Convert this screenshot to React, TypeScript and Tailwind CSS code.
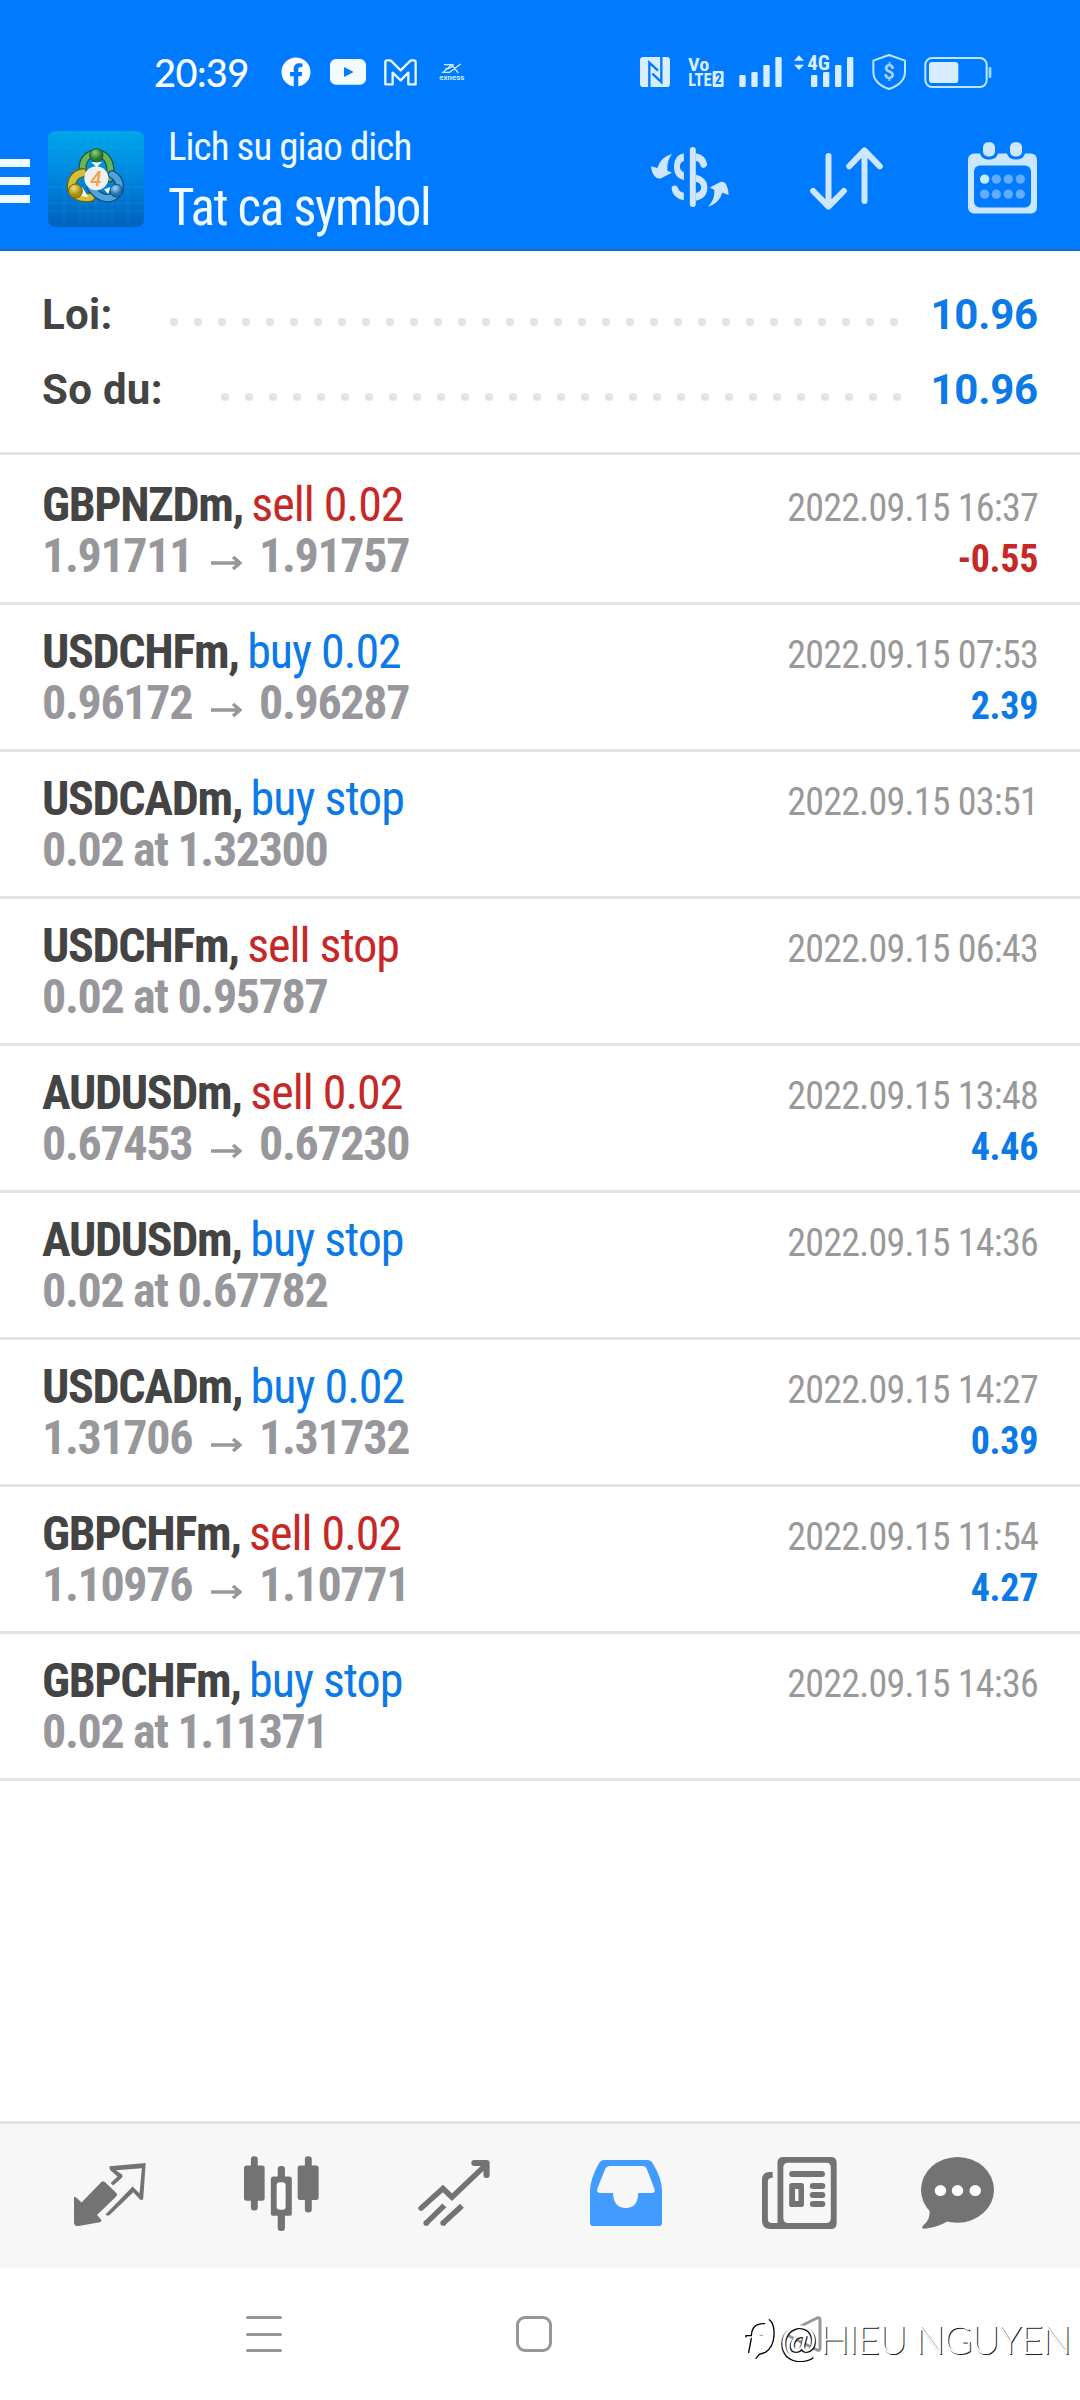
import { ReactNode } from "react";
import { FaFacebook } from "react-icons/fa";

//TYPES
type Side = "buy" | "sell";

interface Order {
  symbol: string;
  side: Side;
  action: string;
  price: string;
  closePrice?: string;
  date: string;
  profit?: string;
}

//DATA
const orders: Order[] = [
  { symbol: "GBPNZDm", side: "sell", action: "sell 0.02", price: "1.91711", closePrice: "1.91757", date: "2022.09.15 16:37", profit: "-0.55" },
  { symbol: "USDCHFm", side: "buy", action: "buy 0.02", price: "0.96172", closePrice: "0.96287", date: "2022.09.15 07:53", profit: "2.39" },
  { symbol: "USDCADm", side: "buy", action: "buy stop", price: "0.02 at 1.32300", date: "2022.09.15 03:51" },
  { symbol: "USDCHFm", side: "sell", action: "sell stop", price: "0.02 at 0.95787", date: "2022.09.15 06:43" },
  { symbol: "AUDUSDm", side: "sell", action: "sell 0.02", price: "0.67453", closePrice: "0.67230", date: "2022.09.15 13:48", profit: "4.46" },
  { symbol: "AUDUSDm", side: "buy", action: "buy stop", price: "0.02 at 0.67782", date: "2022.09.15 14:36" },
  { symbol: "USDCADm", side: "buy", action: "buy 0.02", price: "1.31706", closePrice: "1.31732", date: "2022.09.15 14:27", profit: "0.39" },
  { symbol: "GBPCHFm", side: "sell", action: "sell 0.02", price: "1.10976", closePrice: "1.10771", date: "2022.09.15 11:54", profit: "4.27" },
  { symbol: "GBPCHFm", side: "buy", action: "buy stop", price: "0.02 at 1.11371", date: "2022.09.15 14:36" },
];

//STATUS BAR
const SignalBars = ({ x }: { x: number }) => (
  <g fill="#d8edff">
    <rect x={x} y="105" width="19" height="36" rx="4" />
    <rect x={x + 36} y="96" width="19" height="45" rx="4" />
    <rect x={x + 72} y="75" width="19" height="66" rx="4" />
    <rect x={x + 108} y="51" width="19" height="90" rx="4" />
  </g>
);

const StatusBar = () => (
  <div className="flex h-9 items-center">
    <span className="ml-[154px] w-[127px] font-['Lato'] text-[38px] leading-9 font-medium tracking-[-0.6px] text-white">
      20:39
    </span>
    <FaFacebook className="size-[30px] text-white" />
    <svg className="ml-[19px] h-[26px] w-9" viewBox="180 44 108 78">
      <rect x="180" y="44" width="108" height="77" rx="18" fill="#f4fbff" />
      <path d="M222 68L251 83L222 98z" fill="#007aff" />
    </svg>
    <svg className="ml-[18px] h-[27px] w-[33px]" viewBox="341 41 99 81">
      <path
        d="M350 45H358Q361 45 364 48L391 75L418 48Q421 45 424 45H430Q436 45 436 51V117H414V82L391 105L367 82V117H345V51Q345 45 350 45z"
        fill="none"
        stroke="#eaf7ff"
        strokeWidth="7"
        strokeLinejoin="round"
      />
    </svg>
    <svg className="ml-[22px] h-[18px] w-[26px] overflow-visible" viewBox="508 54 78 54">
      <g fill="none" stroke="#cdeaff" strokeWidth="4">
        <path d="M523 59H546L520 82H542M573 57L538 83M546 59L566 84" />
        <path d="M527 71Q545 73 551 58" />
      </g>
      <text x="509" y="105" textLength="75" lengthAdjust="spacingAndGlyphs" fill="#cdeaff" className="font-['Roboto'] text-[22px] font-bold">
        exness
      </text>
    </svg>

    {/* NFC */}
    <svg className="ml-[175px] h-9 w-[30px]" viewBox="30 42 90 108">
      <rect x="30" y="51" width="90" height="90" rx="10" fill="#d8edff" />
      <path d="M58 142V68L84 92M94 50V126L67 101" fill="none" stroke="#007aff" strokeWidth="7" />
    </svg>
    {/* VoLTE */}
    <svg className="ml-[18px] h-9 w-9 overflow-visible" viewBox="175 42 108 108">
      <text x="175" y="93" textLength="64" lengthAdjust="spacingAndGlyphs" fill="#d8edff" className="font-['Roboto_Condensed'] text-[56px] font-bold">
        Vo
      </text>
      <text x="176" y="139" textLength="70" lengthAdjust="spacingAndGlyphs" fill="#d8edff" className="font-['Roboto_Condensed'] text-[56px] font-bold">
        LTE
      </text>
      <rect x="249" y="93" width="33" height="48" rx="4" fill="#d8edff" />
      <text x="256" y="132" textLength="20" lengthAdjust="spacingAndGlyphs" fill="#007aff" className="font-['Roboto_Condensed'] text-[42px] font-bold">
        2
      </text>
    </svg>
    <svg className="ml-[15px] h-9 w-[43px]" viewBox="328 42 129 108">
      <SignalBars x={329} />
    </svg>
    <svg className="ml-3 h-9 w-[60px] overflow-visible" viewBox="493 42 180 108">
      <path d="M508 46L523 62H493zM508 90L523 74H493z" fill="#d8edff" />
      <SignalBars x={544} />
      <text x="533" y="90" textLength="68" lengthAdjust="spacingAndGlyphs" fill="#d8edff" className="font-['Roboto_Condensed'] text-[59px] font-bold">
        4G
      </text>
    </svg>
    {/* SHIELD */}
    <svg className="ml-[18px] h-9 w-[34px]" viewBox="725 42 102 108">
      <path d="M776 45L824 62V95Q824 130 776 147Q729 130 729 95V62z" fill="none" stroke="#bfe6ff" strokeWidth="6" strokeLinejoin="round" />
      <text x="776" y="117" textAnchor="middle" fill="#a5d2ff" className="font-['Roboto'] text-[60px] font-bold">
        $
      </text>
    </svg>
    {/* BATTERY */}
    <svg className="ml-[18px] h-9 w-[68px]" viewBox="881 42 204 108">
      <rect x="885" y="54" width="184" height="87" rx="20" fill="none" stroke="#bfe6ff" strokeWidth="6" />
      <rect x="896" y="66" width="88" height="63" rx="10" fill="#d8edff" />
      <rect x="1075" y="81" width="8" height="33" rx="3" fill="#a5d8ff" />
    </svg>
  </div>
);

//HEADER ICONS
const AppLogo = () => (
  <svg className="size-24" viewBox="54 33 288 288">
    <defs>
      <linearGradient id="logoBg" x1="0" y1="0" x2="0" y2="1">
        <stop offset="0" stopColor="#00a6ea" />
        <stop offset="0.5" stopColor="#0085dc" />
        <stop offset="1" stopColor="#0062bd" />
      </linearGradient>
      <radialGradient id="green" cx="0.4" cy="0.3">
        <stop offset="0" stopColor="#8fd07a" />
        <stop offset="1" stopColor="#237a2e" />
      </radialGradient>
      <radialGradient id="yellow" cx="0.4" cy="0.3">
        <stop offset="0" stopColor="#f0e57a" />
        <stop offset="1" stopColor="#a58c0c" />
      </radialGradient>
      <radialGradient id="sky" cx="0.4" cy="0.3">
        <stop offset="0" stopColor="#a4dcff" />
        <stop offset="1" stopColor="#1c6fb4" />
      </radialGradient>
    </defs>
    <rect x="54" y="33" width="288" height="288" rx="22" fill="url(#logoBg)" />
    <path
      d="M102 33V321M150 33V321M174 33V321M198 33V321M222 33V321M246 33V321M294 33V321M54 81H342M54 105H342M54 153H342M54 201H342M54 249H342M54 273H342"
      stroke="#3fc0f5"
      strokeOpacity="0.2"
      strokeWidth="2"
    />
    <g strokeLinecap="round" fill="none">
      <path d="M158 155Q154 115 185 102M213 102Q248 118 240 175" stroke="#1d5a2a" strokeWidth="24" />
      <path d="M158 155Q154 115 185 102M213 102Q248 118 240 175" stroke="#6ab45c" strokeWidth="17" />
      <path d="M158 158Q122 165 124 208Q140 238 182 232" stroke="#6d6312" strokeWidth="28" />
      <path d="M158 158Q122 165 124 208Q140 238 182 232" stroke="#d2c136" strokeWidth="20" />
      <path d="M246 163Q274 178 268 212Q250 242 218 232Q198 224 184 204" stroke="#14507f" strokeWidth="26" />
      <path d="M246 163Q274 178 268 212Q250 242 218 232Q198 224 184 204" stroke="#4fa2da" strokeWidth="18" />
    </g>
    <path d="M184 126L216 126L200 142zM156 200L176 232L152 228zM244 200L234 222L222 208z" fill="#eef7ee" />
    <circle cx="199" cy="106" r="20" fill="url(#green)" stroke="#1d5a2a" strokeWidth="3" />
    <circle cx="136" cy="213" r="21" fill="url(#yellow)" stroke="#6d6312" strokeWidth="3" />
    <circle cx="259" cy="212" r="19" fill="url(#sky)" stroke="#14507f" strokeWidth="3" />
    <circle cx="199" cy="175" r="36" fill="#eff0f4" />
    <text x="198" y="197" textAnchor="middle" fill="#f5a04a" className="font-['Roboto'] text-[62px] font-medium italic">
      4
    </text>
  </svg>
);

const SymbolIcon = () => (
  <svg className="h-[60px] w-[78px]" viewBox="33 36 235 181" fill="#cfe6ff">
    <rect x="150" y="36" width="18" height="181" rx="9" />
    <path d="M132 55Q102 60 102 95Q102 130 132 136V112Q120 108 120 95Q120 82 132 78z" />
    <path d="M95 162Q95 152 105 152Q112 152 115 162Q120 172 132 174V197Q98 190 95 162z" />
    <path d="M168 55Q198 60 202 88Q201 98 190 99Q183 98 181 88Q178 79 168 78z" />
    <path d="M168 119Q203 128 203 158Q203 191 168 198V175Q184 171 184 158Q184 145 168 141z" />
    <path d="M96 57Q80 78 82 108L96 114Q78 123 62 131Q50 133 44 124Q34 112 33 94L52 99Q62 66 96 57z" />
    <path d="M205 216Q226 195 224 166L210 158Q228 149 244 141Q256 140 261 152Q267 165 267 181L248 174Q238 206 205 216z" />
  </svg>
);

const SortIcon = () => (
  <svg className="h-[63px] w-[73px]" viewBox="509 36 218 189" fill="none" stroke="#cfe6ff" strokeWidth="18" strokeLinecap="round" strokeLinejoin="round">
    <path d="M564 63V212M518 168L564 215L610 168" />
    <path d="M672 198V48M626 94L672 46L718 94" />
  </svg>
);

const CalendarIcon = () => (
  <svg className="h-[72px] w-[69px]" viewBox="984 20 207 215">
    <rect x="984" y="54" width="207" height="180" rx="18" fill="#cbe7ff" />
    <rect x="1002" y="90" width="171" height="126" rx="18" fill="#007aff" />
    {[1029, 1110].map((x) => (
      <g key={x}>
        <rect x={x - 9} y="20" width="54" height="52" rx="22" fill="#007aff" />
        <path d={`M${x - 9} 20h54v34h-54z`} fill="#007aff" />
        <rect x={x} y="20" width="36" height="43" rx="15" fill="#cfe6ff" />
      </g>
    ))}
    {[131, 176].map((y) =>
      [1034, 1069, 1105, 1141].map((x) => (
        <circle key={`${x}-${y}`} cx={x} cy={y} r="14" fill={x === 1034 && y === 131 ? "#c4ebff" : "#62adff"} />
      ))
    )}
  </svg>
);

const Header = () => (
  <header className="h-[251px] border-b-2 border-[#1a6cc8] bg-[#007aff] pt-[54px]">
    <StatusBar />
    <div className="mt-[41px] flex items-start">
      <div className="mt-7 flex w-[30px] flex-col gap-[10px]">
        <div className="h-2 bg-[#f0faff]" />
        <div className="h-2 bg-[#f0faff]" />
        <div className="h-2 bg-[#f0faff]" />
      </div>
      <div className="ml-[18px]">
        <AppLogo />
      </div>
      <div className="-mt-[9px] ml-[24px] w-[483px] font-['Roboto_Condensed'] text-[#f0fbff]">
        <p className="text-[39px] leading-[50px] tracking-[-0.95px]">Lich su giao dich</p>
        <p className="text-[51px] leading-[72px] tracking-[-1.35px]">Tat ca symbol</p>
      </div>
      <div className="mt-4">
        <SymbolIcon />
      </div>
      <div className="mt-4 ml-[81px]">
        <SortIcon />
      </div>
      <div className="mt-[10.5px] ml-[85px]">
        <CalendarIcon />
      </div>
    </div>
  </header>
);

//SUMMARY
const SummaryRow = ({ label, value, dots, labelWidth }: { label: string; value: string; dots: number; labelWidth: string }) => (
  <div className="flex h-[75px] items-center pr-[42px] pl-[42px] text-[42px] leading-[75px] font-bold">
    <span className={`${labelWidth} shrink-0 tracking-[0.3px] text-[#444444]`}>{label}</span>
    <div className="mt-[15px] flex">
      {Array.from({ length: dots }, (_, i) => (
        <span key={i} className="mx-2 size-2 rounded-full bg-[#e3e3e3]" />
      ))}
    </div>
    <span className="ml-auto tracking-[-0.2px] text-[#0b79e8]">{value}</span>
  </div>
);

//ORDERS
const OrderRow = ({ order }: { order: Order }) => (
  <li className="h-[147px] border-b-[3px] border-[#e3e3e3] px-[42px] pt-[21px] first:h-[150px] first:pt-6">
    <div className="flex h-[51px] items-baseline justify-between leading-[51px]">
      <p className="flex items-baseline gap-[8.5px] text-[48px]">
        <span className="font-bold tracking-[-1.35px] text-[#444444]">{order.symbol},</span>
        <span className={`tracking-[-1px] ${order.side === "buy" ? "text-[#0b79e8]" : "text-[#c62828]"}`}>
          {order.action}
        </span>
      </p>
      <span className="text-[38px] tracking-[-0.75px] text-[#999999]">{order.date}</span>
    </div>
    <div className="flex h-[51px] items-baseline justify-between leading-[51px] font-bold">
      <p className="flex items-baseline text-[48px] tracking-[-1.35px] text-[#98989c]">
        {order.price}
        {order.closePrice && (
          <>
            <svg className="mr-[17px] ml-[19px] h-[14px] w-[31px] translate-y-[-2px]" viewBox="0 0 31 14" fill="none" stroke="#98989c" strokeWidth="3.5">
              <path d="M0 7H29M22 1L29 7L22 13" />
            </svg>
            {order.closePrice}
          </>
        )}
      </p>
      {order.profit && (
        <span className={`text-[38px] tracking-[-0.35px] ${order.profit.startsWith("-") ? "text-[#c62828]" : "text-[#0b79e8]"}`}>
          {order.profit}
        </span>
      )}
    </div>
  </li>
);

//TAB BAR
const TabIcon = ({ viewBox, className, children }: { viewBox: string; className: string; children: ReactNode }) => (
  <svg viewBox={viewBox} preserveAspectRatio="none" className={className} fill="#737373">
    {children}
  </svg>
);

const TabBar = () => (
  <nav className="flex h-[147px] items-start border-t-[3px] border-[#e3e3e3] bg-[#f7f7f7] pl-[74px]">
    {/* QUOTES */}
    <TabIcon viewBox="215 158 210 190" className="mt-[39px] h-[63px] w-[72px]">
      <path d="M215 261Q220 260 224 264L237 277L294 216Q299 210 305 215L337 247Q343 253 338 259L282 315L292 326Q299 334 290 337L228 348Q215 349 215 338z" />
      <path d="M319 168L424 158L417 265Q414 273 407 267L388 246L319 315Q312 319 307 313L386 229L406 250L413 174L337 180L355 193Q359 199 354 203L329 226L322 218L342 199L321 180Q317 173 319 168z" />
    </TabIcon>
    {/* CHART */}
    <TabIcon viewBox="709 140 218 223" className="mt-8 ml-[98px] h-[75px] w-[75px]">
      <rect x="729" y="141" width="20" height="161" rx="9" />
      <rect x="709" y="168" width="60" height="105" rx="7" />
      <rect x="886" y="141" width="20" height="167" rx="9" />
      <rect x="865" y="168" width="61" height="103" rx="7" />
      <rect x="807" y="170" width="21" height="193" rx="9" />
      <rect x="787" y="201" width="61" height="117" rx="8" />
      <rect x="804" y="218" width="26" height="82" rx="9" fill="#fbfbfb" />
    </TabIcon>
    {/* TRADE */}
    <TabIcon viewBox="1213 150 208 199" className="mt-[36px] ml-[99px] h-[66px] w-[72px]">
      <g fill="none" stroke="#737373" strokeWidth="16" strokeLinecap="round">
        <path d="M1222 295L1285 236L1311 262L1406 168" />
        <path d="M1376 159H1411V195" strokeWidth="18" strokeLinejoin="round" />
      </g>
      <path d="M1237 340L1289 287M1286 340L1340 288" stroke="#737373" strokeWidth="16" />
      <circle cx="1237" cy="340" r="8.5" />
      <circle cx="1286" cy="340" r="8.5" />
    </TabIcon>
    {/* HISTORY */}
    <TabIcon viewBox="147 150 209 198" className="mt-[36px] ml-[100px] h-[66px] w-[72px]">
      <path
        d="M188 150H314Q324 150 330 162Q356 205 356 243V338Q356 348 346 348H157Q147 348 147 338V243Q148 205 172 162Q178 150 188 150zM206 168Q195 168 191 177L168 236Q165 249 177 249H214Q215 294 251 294Q286 294 287 249H326Q338 249 334 236L312 177Q309 168 298 168z"
        fillRule="evenodd"
        fill="#429bff"
      />
    </TabIcon>
    {/* NEWS */}
    <TabIcon viewBox="646 141 218 216" className="mt-[33px] ml-[100px] h-[72px] w-[75px]">
      <path
        d="M708 141H846Q863 141 863 158V339Q863 357 846 357H671Q646 357 646 332V210Q646 186 668 186H677V203Q663 203 663 214V328Q663 339 675 339H691V158Q691 141 708 141zM722 158Q708 158 708 172V325Q708 339 722 339H833Q846 339 846 325V172Q846 158 833 158z"
        fillRule="evenodd"
      />
      <rect x="725" y="183" width="104" height="18" rx="9" />
      <path d="M733 219H761Q768 219 768 227V284Q768 291 761 291H733Q725 291 725 284V227Q725 219 733 219zM742 237V273H752V237z" fillRule="evenodd" />
      <rect x="785" y="219" width="45" height="18" rx="9" />
      <rect x="785" y="246" width="45" height="18" rx="9" />
      <rect x="785" y="273" width="45" height="18" rx="9" />
    </TabIcon>
    {/* MESSAGES */}
    <TabIcon viewBox="1108 141 210 217" className="mt-[33px] ml-[84px] h-[72px] w-[73px]">
      <ellipse cx="1213" cy="240" rx="105" ry="99" />
      <path d="M1132 295Q1138 330 1113 349Q1108 357 1118 357Q1155 354 1186 334z" />
      <circle cx="1164" cy="242" r="16.5" fill="#fff" />
      <circle cx="1213" cy="242" r="16.5" fill="#fff" />
      <circle cx="1264" cy="242" r="16.5" fill="#fff" />
    </TabIcon>
  </nav>
);

//SYSTEM NAVIGATION
const SystemNav = () => (
  <div className="relative flex h-[132px] gap-[234px] pt-12 pl-[246px]">
    <div className="flex h-9 w-9 flex-col justify-between">
      <div className="h-[3px] rounded-full bg-[#979797]" />
      <div className="h-[3px] rounded-full bg-[#979797]" />
      <div className="h-[3px] rounded-full bg-[#979797]" />
    </div>
    <div className="size-9 rounded-[9px] border-[3px] border-[#979797]" />
    <svg className="size-9" viewBox="0 0 36 36" fill="none" stroke="#979797" strokeWidth="3" strokeLinejoin="round">
      <path d="M31 2L3 16Q1 18 3 20L31 34Q34 35 34 32V4Q34 1 31 2z" />
    </svg>

    {/* WATERMARK */}
    <div className="absolute top-[47px] left-[744px] flex h-12 items-center font-['Lato'] leading-12 whitespace-nowrap text-white">
      <svg className="mt-0 h-[44px] w-[36px]" viewBox="42 68 108 132" fill="none" strokeLinecap="round">
        <path d="M60 168L70 112Q76 84 108 80Q134 84 132 122Q130 160 98 174L80 186M48 124H64M90 120H98" stroke="#fff" strokeWidth="10" />
        <path d="M56 174L64 132M48 128V124H64Q66 86 104 88M118 76Q134 88 132 124Q130 158 106 174L88 180L78 192" stroke="#000" strokeWidth="4" />
        <path d="M90 123H98" stroke="#999" strokeWidth="3" />
      </svg>
      <span className="w-[40px] text-[44px] font-normal [text-shadow:-1px_1px_0_#000,1px_1px_0_#000]">@</span>
      <span className="text-[39px] font-light tracking-[-1.15px] [text-shadow:1px_1px_0_#222]">HIEU NGUYEN</span>
    </div>
  </div>
);

export default function App() {
  return (
    <div className="flex h-[2400px] w-[1080px] flex-col overflow-hidden bg-white font-['Roboto']">
      <Header />
      <section className="h-[204px] border-b-[3px] border-[#e3e3e3] pt-[26px]">
        <SummaryRow label="Loi:" value="10.96" dots={31} labelWidth="w-[120px]" />
        <SummaryRow label="So du:" value="10.96" dots={29} labelWidth="w-[171px]" />
      </section>
      <ul className="flex-1 font-['Roboto_Condensed']">
        {orders.map((order, index) => (
          <OrderRow key={index} order={order} />
        ))}
      </ul>
      <TabBar />
      <SystemNav />
    </div>
  );
}
